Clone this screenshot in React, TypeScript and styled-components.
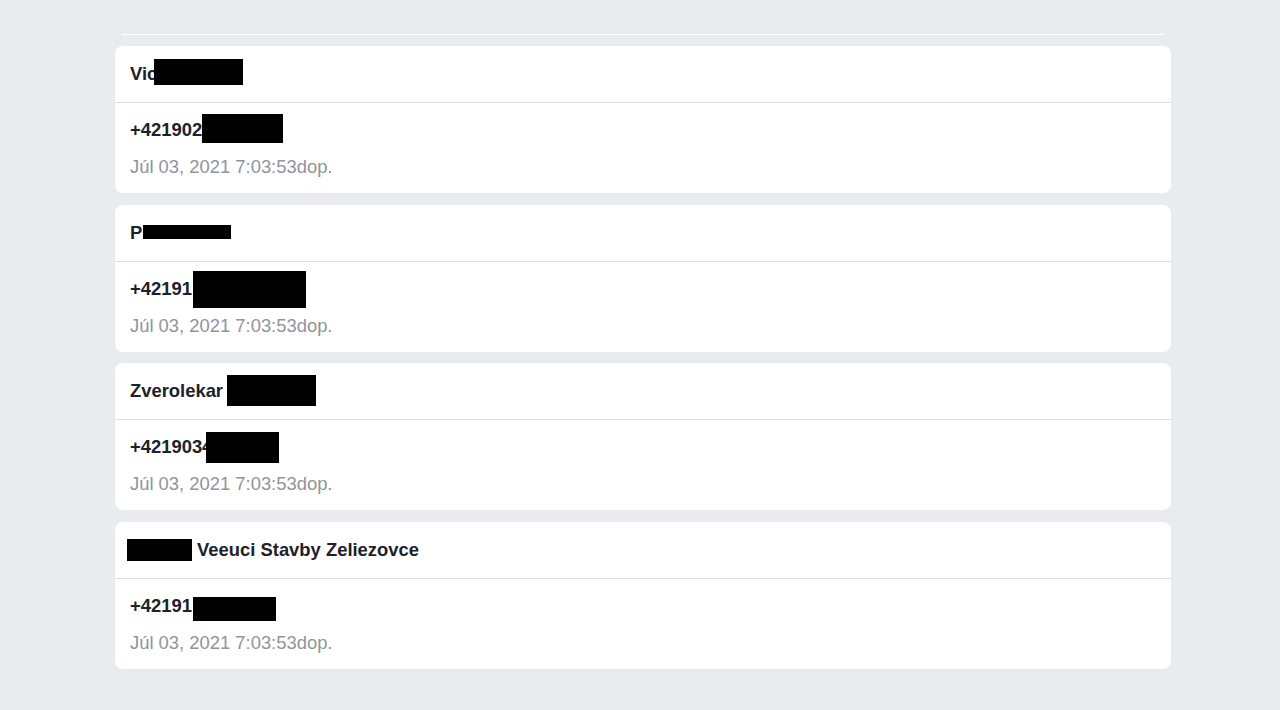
import styled, { createGlobalStyle } from "styled-components";

const GlobalStyle = createGlobalStyle`
    html, body {
        margin: 0;
        padding: 0;
        background: #e9ebee;
        font-family: "Liberation Sans", Arial, sans-serif;
    }
`;

type Box = { w: number; h: number; dx?: number; dy?: number };
type Part = { text?: string; box?: Box };
type Contact = { name: Part[]; phone: Part[]; date: string };

const contacts: Contact[] = [
    {
        name: [{ text: "Vic" }, { box: { w: 89, h: 26, dx: -3, dy: -2 } }],
        phone: [{ text: "+421902" }, { box: { w: 81, h: 29, dy: -2 } }],
        date: "Júl 03, 2021 7:03:53dop.",
    },
    {
        name: [{ text: "P" }, { box: { w: 88, h: 14, dx: 1, dy: -1 } }],
        phone: [{ text: "+42191" }, { box: { w: 113, h: 37, dx: 1, dy: 1 } }],
        date: "Júl 03, 2021 7:03:53dop.",
    },
    {
        name: [{ text: "Zverolekar " }, { box: { w: 89, h: 31, dx: -1, dy: -1 } }],
        phone: [{ text: "+4219034" }, { box: { w: 73, h: 31, dx: -6 } }],
        date: "Júl 03, 2021 7:03:53dop.",
    },
    {
        name: [{ box: { w: 65, h: 22 } }, { text: " Veeuci Stavby Zeliezovce" }],
        phone: [{ text: "+42191" }, { box: { w: 83, h: 24, dx: 1, dy: 3 } }],
        date: "Júl 03, 2021 7:03:53dop.",
    },
];

const App = () => {
    return (
        <>
            <GlobalStyle />
            <Page>
                <TopRule />
                <List>
                    {contacts.map((c, i) => (
                        <Card key={i}>
                            <Header $boxFirst={c.name[0].box !== undefined}>{renderParts(c.name)}</Header>
                            <Body>
                                <Phone>{renderParts(c.phone)}</Phone>
                                <Stamp>{c.date}</Stamp>
                            </Body>
                        </Card>
                    ))}
                </List>
            </Page>
        </>
    );
};

// black redaction bars sit over the text, like in the screenshot
const renderParts = (parts: Part[]) =>
    parts.map((p, i) =>
        p.box ? (
            <Redacted key={i} $w={p.box.w} $h={p.box.h} $dx={p.box.dx || 0} $dy={p.box.dy || 0} />
        ) : (
            <span key={i}>{p.text}</span>
        )
    );

const Page = styled.div`
    padding: 34px 109px 40px 115px;
    min-height: 710px;
    box-sizing: border-box;
`;

const TopRule = styled.div`
    height: 1px;
    margin: 0 7px;
    background: #ffffff;
`;

const List = styled.div`
    display: flex;
    flex-direction: column;
    gap: 11.5px;
    margin-top: 11px;
`;

const Card = styled.div`
    background: #ffffff;
    border-radius: 8px;
    overflow: hidden;
`;

const Header = styled.div<{ $boxFirst: boolean }>`
    display: flex;
    align-items: center;
    height: 56px;
    padding: 0 15px 0 ${(p) => (p.$boxFirst ? "12px" : "15px")};
    border-bottom: 1px solid #dddfe2;
    font-size: 18.4px;
    font-weight: bold;
    color: #1d2129;
    white-space: pre;
`;

const Body = styled.div`
    padding: 15px 15px 16px;
    display: flex;
    flex-direction: column;
    gap: 15px;
`;

const Phone = styled.div`
    display: flex;
    align-items: center;
    height: 22px;
    padding-top: 1px;
    margin-bottom: -1px;
    font-size: 18.4px;
    font-weight: bold;
    color: #1d2129;
`;

const Stamp = styled.div`
    height: 22px;
    line-height: 23px;
    font-size: 18.4px;
    color: #90949c;
`;

const Redacted = styled.span<{ $w: number; $h: number; $dx: number; $dy: number }>`
    display: inline-block;
    flex-shrink: 0;
    width: ${(p) => p.$w}px;
    height: ${(p) => p.$h}px;
    margin-left: ${(p) => p.$dx}px;
    transform: translateY(${(p) => p.$dy}px);
    background: #000000;
`;

export default App;
